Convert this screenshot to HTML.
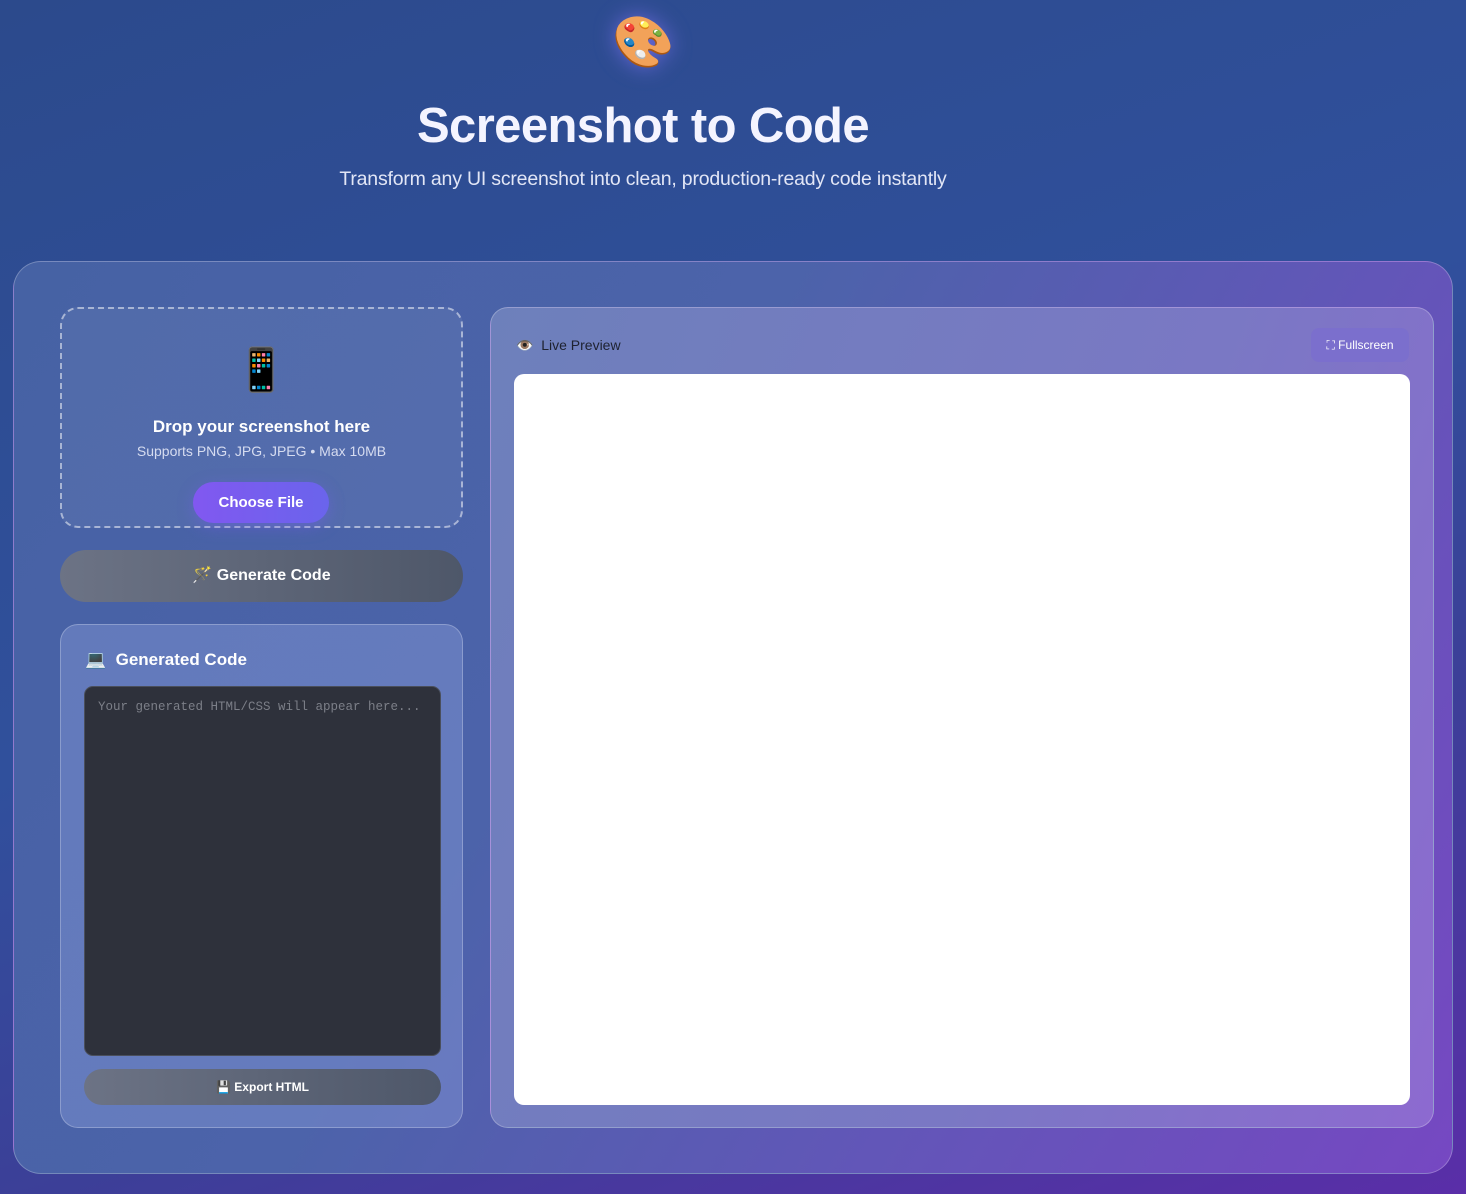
<!DOCTYPE html>
<html><head><meta charset="utf-8"><style>
*{box-sizing:border-box;margin:0;padding:0}
body{width:1466px;height:1194px;overflow:hidden;font-family:"Liberation Sans","DejaVu Sans",sans-serif;color:#fff;
background:linear-gradient(160deg,#2c4a8c 0%,#30509c 45%,#3c3f98 70%,#5a2ea8 100%);position:relative}
.logo{position:absolute;left:612px;top:12px;font-size:50px;line-height:60px;filter:drop-shadow(0 0 10px rgba(140,120,255,.6))}
h1{position:absolute;left:0;width:1286px;top:98px;text-align:center;font-size:49px;font-weight:700;letter-spacing:-0.6px;color:#f4f4ff}
.sub{position:absolute;left:0;width:1286px;top:168px;text-align:center;font-size:19.5px;color:#e2e6f6;letter-spacing:-0.2px}
.main{position:absolute;left:13px;top:261px;width:1440px;height:913px;border-radius:28px;border:1px solid rgba(255,255,255,.25);
background:linear-gradient(120deg,#4662a4 0%,#4c63aa 40%,#6256b8 70%,#7648c2 100%)}
.drop{position:absolute;left:60px;top:307px;width:403px;height:221px;border:2px dashed rgba(255,255,255,.5);border-radius:18px;background:rgba(255,255,255,.06);text-align:center}
.drop .ic{font-size:42px;margin-top:34px;line-height:54px}
.drop .t{font-size:17px;font-weight:700;margin-top:20px}
.drop .s{font-size:14px;color:#d6dcf0;margin-top:6px}
.choose{position:absolute;left:131px;top:173px;width:136px;height:41px;border-radius:21px;background:linear-gradient(90deg,#8158f0,#6a64ec);font-weight:700;font-size:15px;line-height:41px;box-shadow:0 4px 16px rgba(120,90,240,.4)}
.gen{position:absolute;left:60px;top:550px;width:403px;height:52px;border-radius:26px;background:linear-gradient(90deg,#6c7385,#4e5769);text-align:center;line-height:52px;font-weight:700;font-size:16px}
.code{position:absolute;left:60px;top:624px;width:403px;height:504px;border-radius:18px;background:rgba(140,160,220,.4);border:1px solid rgba(255,255,255,.25)}
.code .h{position:absolute;left:24px;top:25px;font-size:17px;font-weight:700}
.code .ta{position:absolute;left:23px;top:61px;width:357px;height:370px;background:#2e313b;border-radius:9px;border:1px solid #4a4f5c;font-family:"Liberation Mono",monospace;font-size:12.5px;color:#7c7f88;padding:13px;white-space:nowrap;overflow:hidden}
.exp{position:absolute;left:23px;top:444px;width:357px;height:36px;border-radius:18px;background:linear-gradient(90deg,#6c7385,#4e5769);text-align:center;line-height:36px;font-size:12px;font-weight:700}
.prev{position:absolute;left:490px;top:307px;width:944px;height:821px;border-radius:18px;border:1px solid rgba(255,255,255,.25);background:linear-gradient(110deg,#6d80bb 0%,#7a78c4 60%,#8d6ad0 100%)}
.prev .h{position:absolute;left:25px;top:29px;font-size:14px;color:#1e2230}
.fs{position:absolute;right:24px;top:20px;width:98px;height:34px;border-radius:8px;background:#7b6fcd;font-size:12px;line-height:34px;text-align:center}
.wh{position:absolute;left:23px;top:66px;width:896px;height:731px;background:#fff;border-radius:10px}
</style></head><body>
<div class="logo">🎨</div>
<h1>Screenshot to Code</h1>
<div class="sub">Transform any UI screenshot into clean, production-ready code instantly</div>
<div class="main"></div>
<div class="drop"><div class="ic">📱</div><div class="t">Drop your screenshot here</div><div class="s">Supports PNG, JPG, JPEG • Max 10MB</div><div class="choose">Choose File</div></div>
<div class="gen">🪄 Generate Code</div>
<div class="code"><div class="h">💻&nbsp; Generated Code</div><div class="ta">Your generated HTML/CSS will appear here...</div><div class="exp">💾 Export HTML</div></div>
<div class="prev"><div class="h">👁️&nbsp; Live Preview</div><div class="fs">⛶ Fullscreen</div><div class="wh"></div></div>
</body></html>
